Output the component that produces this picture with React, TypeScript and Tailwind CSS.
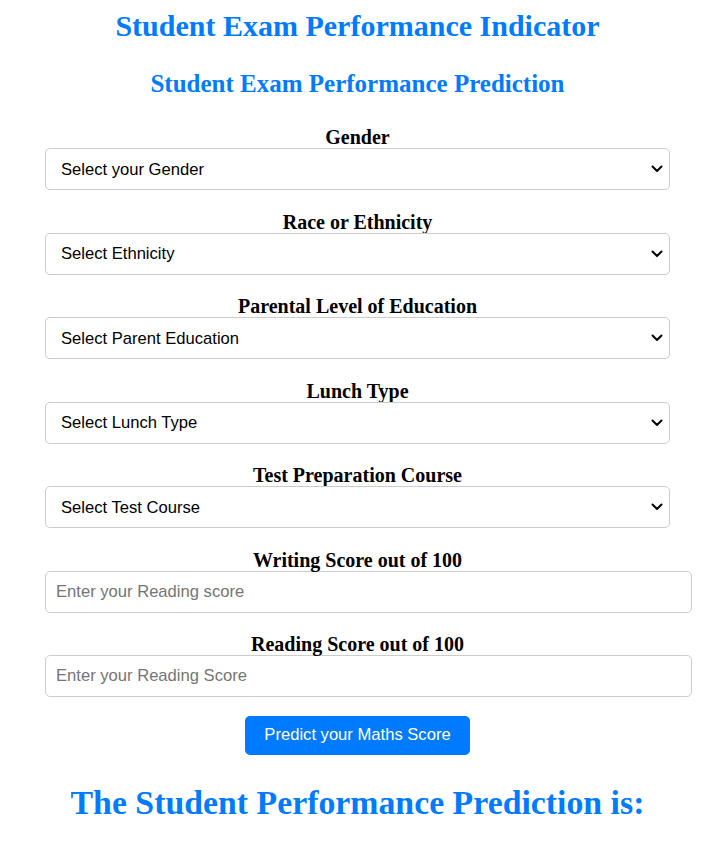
import React from "react";

function Label({ children, mt }: { children: React.ReactNode; mt: string }) {
  return (
    <label
      className={`block text-center font-['Liberation_Serif','Times_New_Roman',serif] font-bold text-[20px] leading-[22px] text-black ${mt}`}
    >
      {children}
    </label>
  );
}

function Select({ text }: { text: string }) {
  return (
    <div className="relative w-[625px]">
      <select
        className="block w-full h-[42px] appearance-none rounded-[5px] border border-[#cccccc] bg-white pl-[15px] pr-8 pt-[2px] font-['Liberation_Sans',Arial,sans-serif] text-[16.6px] text-black outline-none"
        defaultValue=""
      >
        <option value="">{text}</option>
      </select>
      <svg
        className="pointer-events-none absolute right-[7px] top-[17px]"
        width="12"
        height="8"
        viewBox="0 0 12 8"
      >
        <path d="M1.5 1.5 L6 6 L10.5 1.5" fill="none" stroke="#000" strokeWidth="2" strokeLinecap="round" strokeLinejoin="round" />
      </svg>
    </div>
  );
}

function Input({ placeholder }: { placeholder: string }) {
  return (
    <input
      type="number"
      placeholder={placeholder}
      className="block w-[647px] h-[42px] rounded-[5px] border border-[#cccccc] bg-white px-[10px] font-['Liberation_Sans',Arial,sans-serif] text-[16.6px] text-black placeholder:text-[#757575] outline-none"
    />
  );
}

export default function App() {
  return (
    <div className="min-h-[841px] bg-white">
      <div className="ml-[45px] w-[625px]">
        <h1 className="pt-[8px] text-center font-['Liberation_Serif','Times_New_Roman',serif] text-[30px] leading-[36px] font-bold text-[#007bff]">
          Student Exam Performance Indicator
        </h1>
        <h2 className="mt-[26px] text-center font-['Liberation_Serif','Times_New_Roman',serif] text-[25px] leading-[28px] font-bold text-[#007bff]">
          Student Exam Performance Prediction
        </h2>
        <form onSubmit={(e) => e.preventDefault()}>
          <Label mt="mt-[28px]">Gender</Label>
          <Select text="Select your Gender" />
          <Label mt="mt-[20.5px]">Race or Ethnicity</Label>
          <Select text="Select Ethnicity" />
          <Label mt="mt-[20.5px]">Parental Level of Education</Label>
          <Select text="Select Parent Education" />
          <Label mt="mt-[20.5px]">Lunch Type</Label>
          <Select text="Select Lunch Type" />
          <Label mt="mt-[20.5px]">Test Preparation Course</Label>
          <Select text="Select Test Course" />
          <Label mt="mt-[21px]">Writing Score out of 100</Label>
          <Input placeholder="Enter your Reading score" />
          <Label mt="mt-[20px]">Reading Score out of 100</Label>
          <Input placeholder="Enter your Reading Score" />
          <div className="mt-[19px] flex justify-center">
            <button
              type="submit"
              className="h-[39px] w-[225px] rounded-[5px] bg-[#007bff] font-['Liberation_Sans',Arial,sans-serif] text-[16.6px] text-white"
            >
              Predict your Maths Score
            </button>
          </div>
        </form>
        <h1 className="mt-[28px] text-center font-['Liberation_Serif','Times_New_Roman',serif] text-[33.8px] leading-[40px] font-bold text-[#007bff]">
          The Student Performance Prediction is:
        </h1>
      </div>
    </div>
  );
}
